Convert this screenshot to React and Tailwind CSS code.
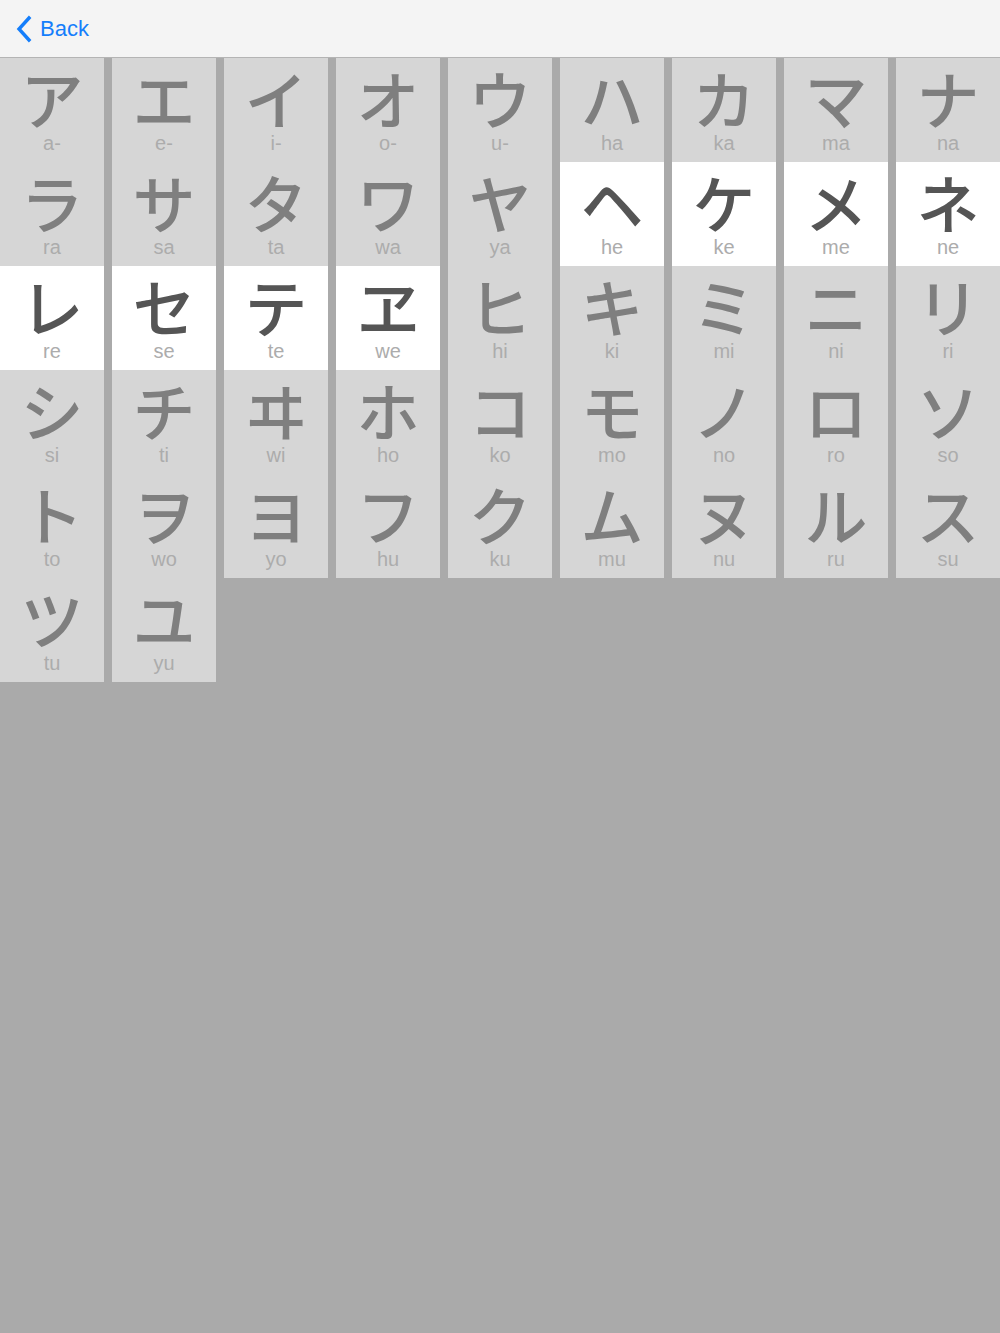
const columns = [
  [["ア", "a-"], ["ラ", "ra"], ["レ", "re", true], ["シ", "si"], ["ト", "to"], ["ツ", "tu"]],
  [["エ", "e-"], ["サ", "sa"], ["セ", "se", true], ["チ", "ti"], ["ヲ", "wo"], ["ユ", "yu"]],
  [["イ", "i-"], ["タ", "ta"], ["テ", "te", true], ["ヰ", "wi"], ["ヨ", "yo"]],
  [["オ", "o-"], ["ワ", "wa"], ["ヱ", "we", true], ["ホ", "ho"], ["フ", "hu"]],
  [["ウ", "u-"], ["ヤ", "ya"], ["ヒ", "hi"], ["コ", "ko"], ["ク", "ku"]],
  [["ハ", "ha"], ["ヘ", "he", true], ["キ", "ki"], ["モ", "mo"], ["ム", "mu"]],
  [["カ", "ka"], ["ケ", "ke", true], ["ミ", "mi"], ["ノ", "no"], ["ヌ", "nu"]],
  [["マ", "ma"], ["メ", "me", true], ["ニ", "ni"], ["ロ", "ro"], ["ル", "ru"]],
  [["ナ", "na"], ["ネ", "ne", true], ["リ", "ri"], ["ソ", "so"], ["ス", "su"]],
];

const KanaCell = ({ kana, romaji, active }) => (
  <div
    className={
      "h-[104px] flex flex-col items-center pt-[7px] " +
      (active ? "bg-white" : "bg-[#d6d6d6]")
    }
  >
    <div
      className={
        "h-[64px] text-[63px] leading-[64px] font-medium font-['Noto_Sans_CJK_JP',sans-serif] " +
        (active ? "text-[#555555]" : "text-[#7f7f7f]")
      }
    >
      {kana}
    </div>
    <div className="h-[22px] text-[20px] leading-[22px] mt-[3px] text-[#acacac] font-['Liberation_Sans',sans-serif]">
      {romaji}
    </div>
  </div>
);

export default function App() {
  return (
    <div className="min-h-screen bg-[#aaaaaa] flex flex-col">
      {/* Nav bar */}
      <div className="h-[58px] bg-[#f4f4f4] border-b border-[#b4b4b4] flex items-center pl-[15px]">
        <svg width="18" height="28" viewBox="0 0 18 28" className="mr-[7px]">
          <path
            d="M14 3 L4 14 L14 25"
            fill="none"
            stroke="#147efb"
            strokeWidth="3.4"
            strokeLinecap="square"
          />
        </svg>
        <span className="text-[22px] text-[#147efb] font-['Liberation_Sans',sans-serif]">
          Back
        </span>
      </div>

      {/* Kana grid */}
      <div className="flex gap-2 items-start">
        {columns.map((col, i) => (
          <div key={i} className="w-[104px] flex flex-col">
            {col.map(([kana, romaji, active]) => (
              <KanaCell key={romaji} kana={kana} romaji={romaji} active={active} />
            ))}
          </div>
        ))}
      </div>
    </div>
  );
}
